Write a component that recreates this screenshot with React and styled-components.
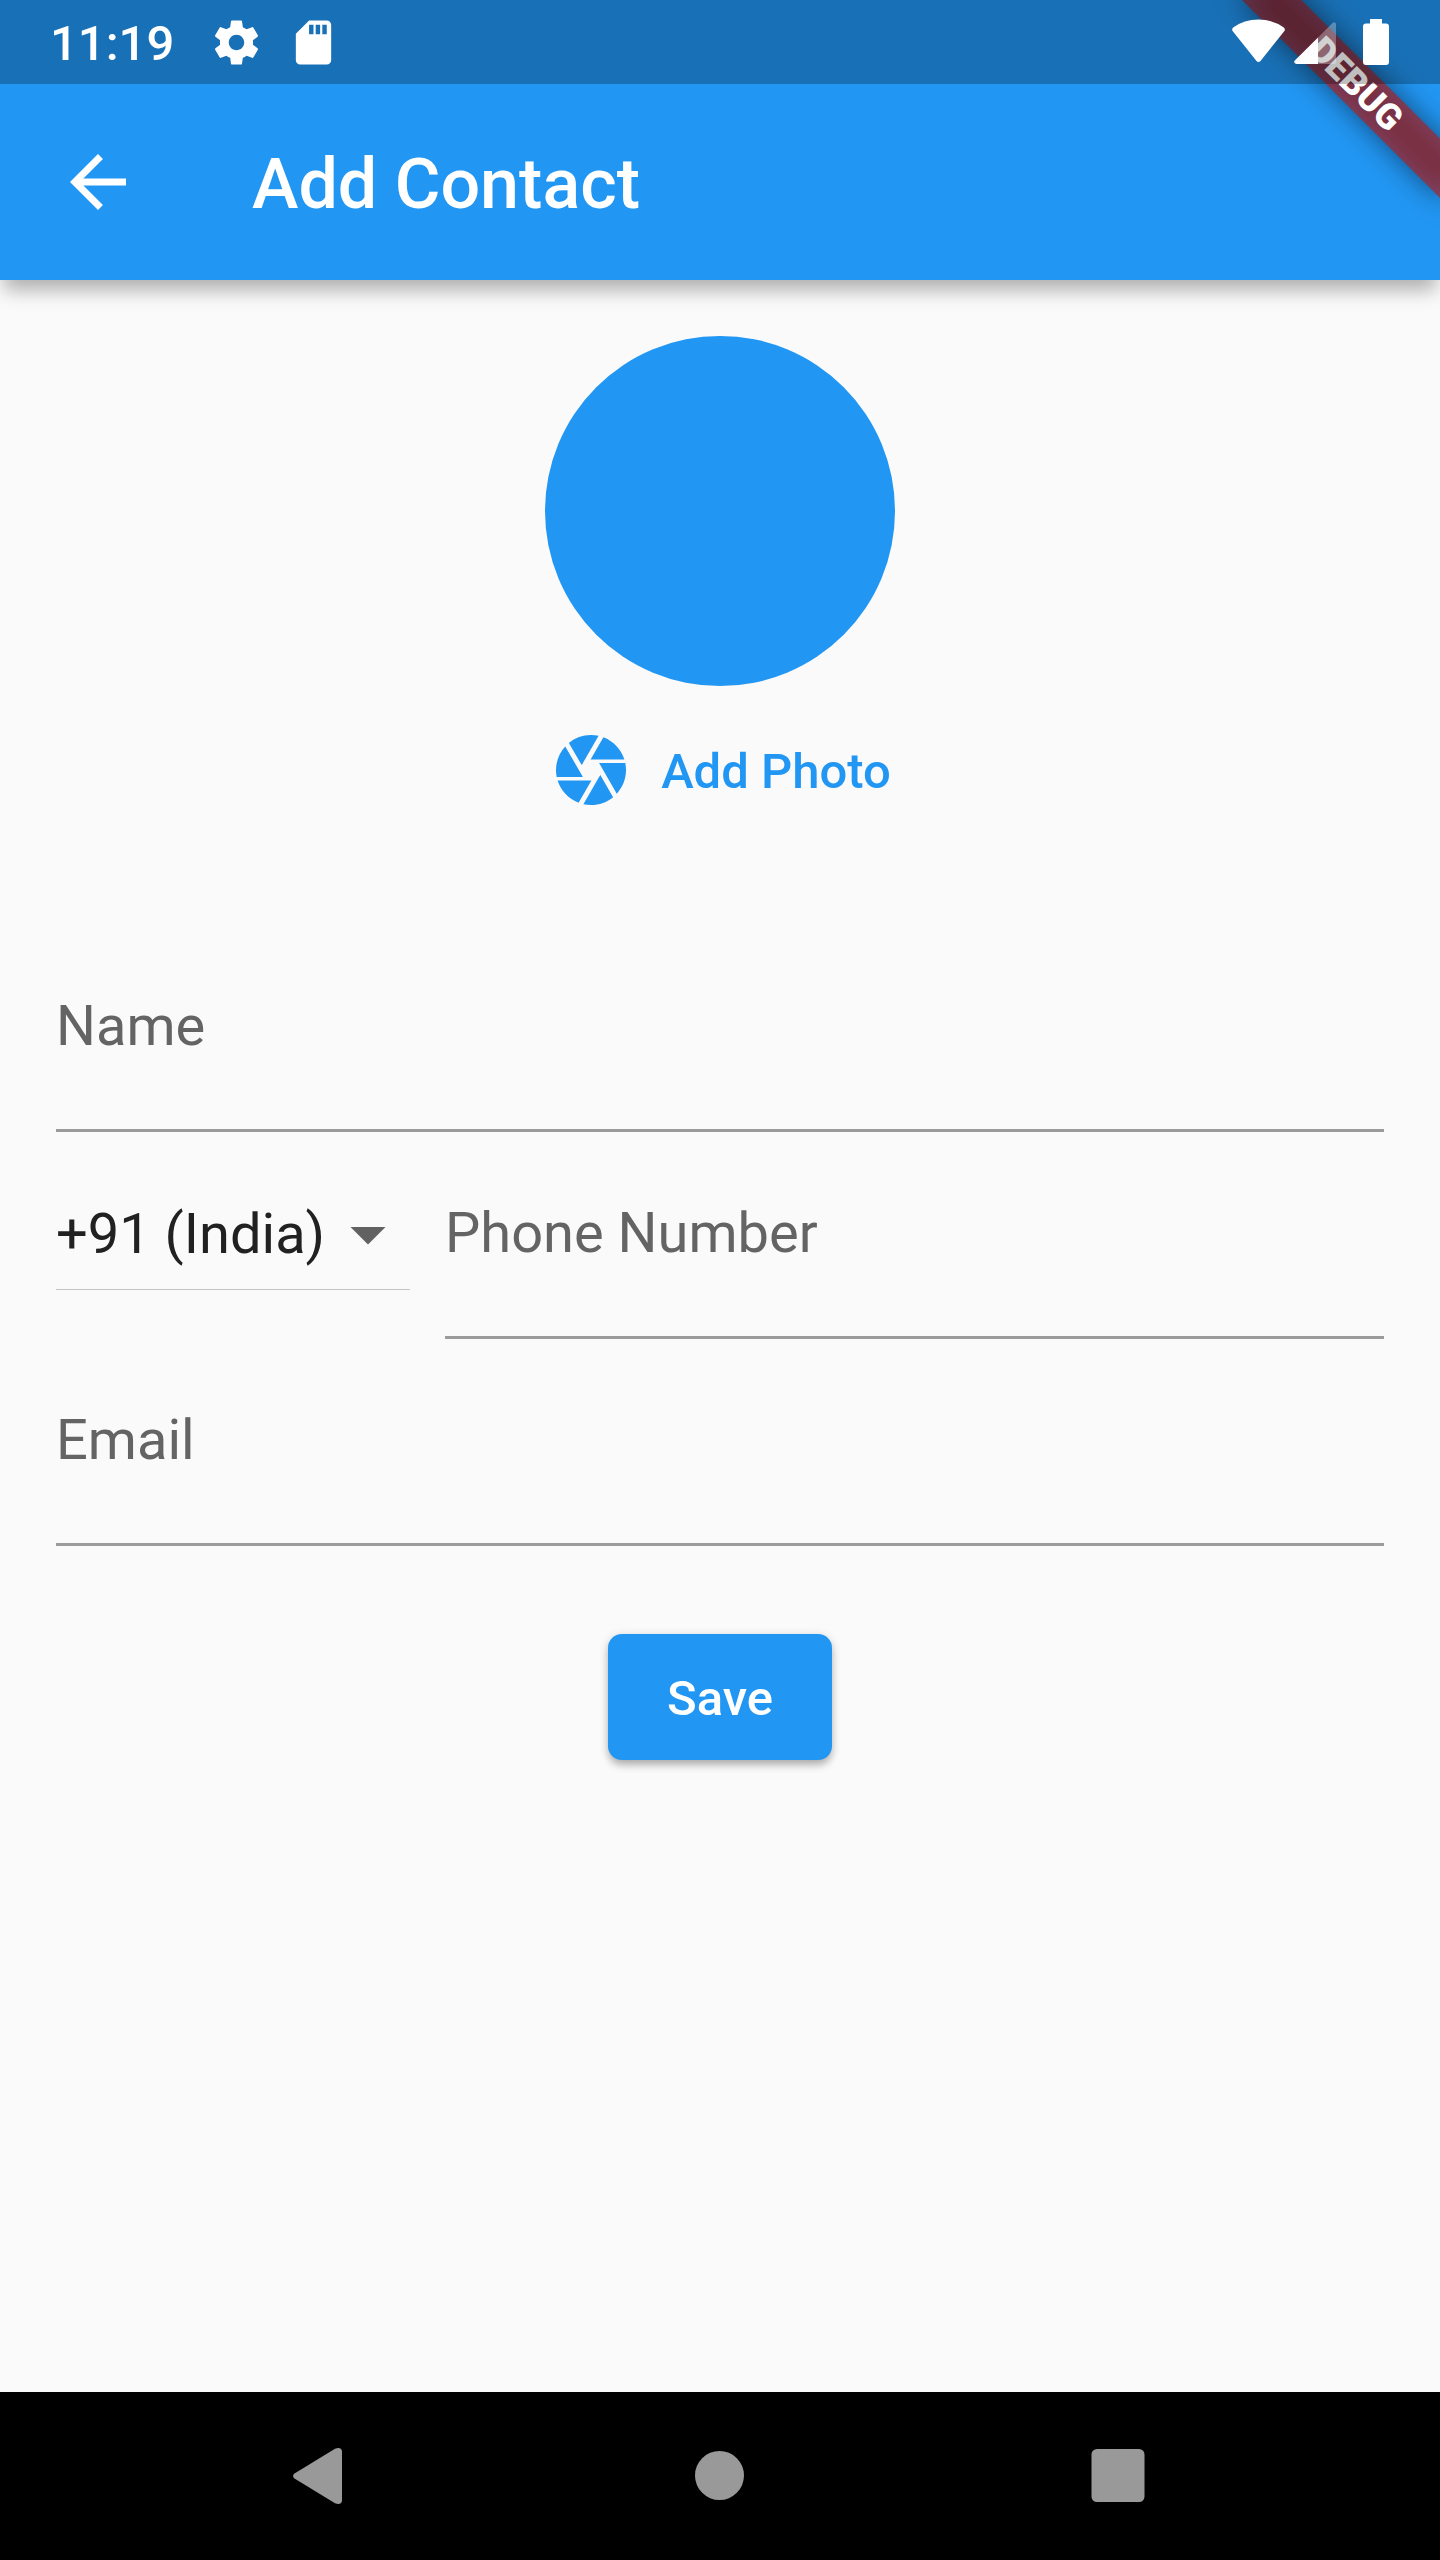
import React from "react";
import styled, { createGlobalStyle } from "styled-components";

const GlobalStyle = createGlobalStyle`
  *, *::before, *::after { box-sizing: border-box; }
  body {
    margin: 0;
    background: #fafafa;
    font-family: Roboto, "Noto Sans", sans-serif;
  }
  button, input, select { font: inherit; }
`;

const Screen = styled.div`
  display: flex;
  flex-direction: column;
  min-height: 100vh;
  background: #fafafa;
`;

const Header = styled.header`
  position: relative;
  background: #2196f3;
  color: #fff;
  box-shadow: 0 14px 18px -4px rgba(0, 0, 0, 0.3);
`;

const StatusBar = styled.div`
  position: relative;
  z-index: 2;
  display: flex;
  align-items: center;
  justify-content: space-between;
  height: 84px;
  padding: 0 50px;
  background: rgba(0, 0, 0, 0.25);
`;

const StatusGroup = styled.div`
  display: flex;
  align-items: center;
  gap: ${(p) => p.$gap}px;
`;

const Clock = styled.time`
  padding: 3px 12px 0 0;
  font-size: 49px;
  line-height: 60px;
  font-weight: 500;
`;

const Glyph = styled.svg`
  display: block;
  flex: none;
  width: ${(p) => p.$w}px;
  height: ${(p) => p.$h || p.$w}px;
  fill: currentColor;
`;

const Toolbar = styled.div`
  display: flex;
  align-items: center;
  gap: 84px;
  height: 196px;
  padding: 0 56px;
`;

const IconButton = styled.button`
  display: flex;
  padding: 0;
  border: 0;
  background: none;
  color: inherit;
  cursor: pointer;
`;

const Title = styled.h1`
  margin: 0;
  padding: 3px 0 0 28px;
  font-size: 70px;
  line-height: 84px;
  font-weight: 500;
`;

const Corner = styled.div`
  position: absolute;
  top: 0;
  right: 0;
  z-index: 1;
  width: 280px;
  height: 280px;
  overflow: hidden;
  pointer-events: none;
`;

const Ribbon = styled.div`
  position: absolute;
  top: 98px;
  right: -140px;
  width: 280px;
  height: 42px;
  transform: rotate(45deg);
  transform-origin: 140px -98px;
  font-size: 36px;
  line-height: 42px;
  font-weight: 900;
  text-align: center;

  &::before {
    content: "";
    position: absolute;
    inset: 0;
    background: rgba(0, 0, 0, 0.5);
    filter: blur(14px);
  }
`;

const RibbonText = styled.span`
  position: relative;
  display: block;
  background: rgba(183, 28, 28, 0.63);
`;

const Main = styled.main`
  flex: 1;
  display: flex;
  flex-direction: column;
  align-items: center;
  padding: 56px;
`;

const Avatar = styled.div`
  width: 350px;
  height: 350px;
  border-radius: 50%;
  background: #2196f3;
`;

const TextButton = styled.button`
  display: flex;
  align-items: center;
  gap: 28px;
  height: 168px;
  padding: 0 28px;
  border: 0;
  background: none;
  color: #2196f3;
  cursor: pointer;
`;

const ButtonText = styled.span`
  display: block;
  padding-top: 3px;
  font-size: 49px;
  line-height: 60px;
  font-weight: 500;
`;

const Form = styled.form`
  align-self: stretch;
  display: flex;
  flex-direction: column;
  gap: 68px;
  margin-top: 139px;
`;

const Row = styled.div`
  display: flex;
  align-items: flex-start;
  gap: 35px;
`;

const Field = styled.div`
  flex: 1;
  min-width: 0;
  display: flex;
  flex-direction: column;
`;

const Label = styled.label`
  color: #646464;
  font-size: 56px;
  line-height: 66px;
`;

const Input = styled.input`
  width: 100%;
  height: 73px;
  padding: 0;
  border: 0;
  border-bottom: 3px solid #9b9b9b;
  border-radius: 0;
  outline: none;
  background: none;
  color: #212121;
  font-size: 56px;
`;

const SelectBox = styled.div`
  display: grid;
  grid-template-columns: 270px 84px;
  border-bottom: 1px solid #c4c4c4;
  color: #616161;
`;

const Select = styled.select`
  grid-area: 1 / 1 / 2 / 3;
  appearance: none;
  width: 100%;
  padding: 1px 0 22px;
  border: 0;
  outline: none;
  background: none;
  color: #212121;
  font-size: 56px;
  line-height: 66px;
`;

const SelectArrow = styled(Glyph)`
  grid-area: 1 / 2 / 2 / 3;
  pointer-events: none;
`;

const SaveButton = styled.button`
  align-self: center;
  min-width: 224px;
  height: 126px;
  margin-top: 20px;
  padding: 0 56px;
  border: 0;
  border-radius: 14px;
  background: #2196f3;
  color: #fff;
  box-shadow: 0 6px 8px -1px rgba(0, 0, 0, 0.26), 0 1px 10px rgba(0, 0, 0, 0.12);
  cursor: pointer;
`;

const NavBar = styled.nav`
  display: flex;
  align-items: center;
  justify-content: center;
  gap: 315px;
  height: 168px;
  background: #000;
  color: #999;
`;

export default function App() {
  return (
    <Screen>
      <GlobalStyle />
      <Header>
        <StatusBar>
          <StatusGroup $gap={24}>
            <Clock>11:19</Clock>
            <Glyph $w={53} viewBox="0 0 24 24" aria-hidden="true">
              <path d="M19.43 12.98c.04-.32.07-.64.07-.98s-.03-.66-.07-.98l2.11-1.65c.19-.15.24-.42.12-.64l-2-3.46c-.12-.22-.39-.3-.61-.22l-2.49 1c-.52-.4-1.08-.73-1.69-.98l-.38-2.65C14.46 2.18 14.25 2 14 2h-4c-.25 0-.46.18-.49.42l-.38 2.65c-.61.25-1.17.59-1.69.98l-2.49-1c-.23-.09-.49 0-.61.22l-2 3.46c-.13.22-.07.49.12.64l2.11 1.65c-.04.32-.07.65-.07.98s.03.66.07.98l-2.11 1.65c-.19.15-.24.42-.12.64l2 3.46c.12.22.39.3.61.22l2.49-1c.52.4 1.08.73 1.69.98l.38 2.65c.03.24.24.42.49.42h4c.25 0 .46-.18.49-.42l.38-2.65c.61-.25 1.17-.59 1.69-.98l2.49 1c.23.09.49 0 .61-.22l2-3.46c.12-.22.07-.49-.12-.64l-2.11-1.65zM12 15.5c-1.93 0-3.5-1.57-3.5-3.5s1.57-3.5 3.5-3.5 3.5 1.57 3.5 3.5-1.57 3.5-3.5 3.5z" />
            </Glyph>
            <Glyph $w={53} viewBox="0 0 24 24" aria-hidden="true">
              <path d="M18 2h-8L4 8v12c0 1.1.9 2 2 2h12c1.1 0 2-.9 2-2V4c0-1.1-.9-2-2-2zm-6 6.300h-2V4h2v4.300zm3 0h-2V4h2v4.300zm3 0h-2V4h2v4.300z" />
            </Glyph>
          </StatusGroup>
          <StatusGroup $gap={9}>
            <Glyph $w={53} $h={46} viewBox="0 0 53 46" aria-hidden="true">
              <path d="M1.200 8.500Q12 .5 26.500 .5T51.800 8.500Q53.800 10.500 52 12.600L28.500 42Q26.500 44 24.500 42L1 12.600Q-.8 10.500 1.200 8.500z" />
            </Glyph>
            <Glyph $w={42} $h={46} viewBox="0 0 42 46" aria-hidden="true">
              <path d="M24 18.500V45H2.500Q-1 44 .8 41.500z" />
              <path opacity=".3" d="M24 18.500L38.500 4Q41 2 42 5V43Q42 45 40 45H24z" />
            </Glyph>
            <Glyph $w={45} $h={46} viewBox="-18 0 45 46" aria-hidden="true">
              <path d="M7 0h12v4.500h4q3 0 3 3V43q0 3-3 3H3q-3 0-3-3V7.500q0-3 3-3h4z" />
            </Glyph>
          </StatusGroup>
        </StatusBar>
        <Toolbar>
          <IconButton type="button" aria-label="Back">
            <Glyph $w={84} viewBox="0 0 24 24" aria-hidden="true">
              <path d="M20 11H7.830l5.590-5.590L12 4l-8 8 8 8 1.410-1.410L7.830 13H20v-2z" />
            </Glyph>
          </IconButton>
          <Title>Add Contact</Title>
        </Toolbar>
        <Corner>
          <Ribbon>
            <RibbonText>DEBUG</RibbonText>
          </Ribbon>
        </Corner>
      </Header>

      <Main>
        <Avatar />
        <TextButton type="button">
          <Glyph $w={84} viewBox="0 0 24 24" aria-hidden="true">
            <path d="M9.400 10.500l4.770-8.260C13.470 2.090 12.750 2 12 2c-2.400 0-4.600.85-6.320 2.250l3.660 6.350.06-.1zM21.540 9c-.92-2.920-3.150-5.260-6-6.340L11.880 9h9.660zm.26 1h-7.490l.29.5 4.760 8.250C21 16.970 22 14.610 22 12c0-.69-.07-1.350-.2-2zM8.540 12l-3.900-6.750C3.010 7.030 2 9.390 2 12c0 .69.07 1.350.2 2h7.490l-1.150-2zm-6.080 3c.92 2.920 3.150 5.260 6 6.340L12.120 15H2.460zm11.270 0l-3.900 6.760c.7.150 1.420.24 2.170.24 2.400 0 4.600-.85 6.320-2.250l-3.660-6.350-.93 1.600z" />
          </Glyph>
          <ButtonText>Add Photo</ButtonText>
        </TextButton>

        <Form onSubmit={(e) => e.preventDefault()}>
          <Field>
            <Label htmlFor="name">Name</Label>
            <Input id="name" type="text" />
          </Field>
          <Row>
            <SelectBox>
              <Select aria-label="Country code" defaultValue="91">
                <option value="91">+91 (India)</option>
              </Select>
              <SelectArrow $w={84} $h={66} viewBox="0 2.300 24 18.860" aria-hidden="true">
                <path d="M7 10l5 5 5-5z" />
              </SelectArrow>
            </SelectBox>
            <Field>
              <Label htmlFor="phone">Phone Number</Label>
              <Input id="phone" type="tel" />
            </Field>
          </Row>
          <Field>
            <Label htmlFor="email">Email</Label>
            <Input id="email" type="email" />
          </Field>
          <SaveButton type="submit">
            <ButtonText>Save</ButtonText>
          </SaveButton>
        </Form>
      </Main>

      <NavBar>
        <IconButton type="button" aria-label="System back">
          <Glyph $w={84} viewBox="0 0 84 84" aria-hidden="true">
            <path d="M15.500 39.500L56 14.700Q62 12.500 63 17V67Q62 71.500 56 69.300L15.500 44.500Q12.500 42 15.500 39.500z" />
          </Glyph>
        </IconButton>
        <IconButton type="button" aria-label="Home">
          <Glyph $w={84} viewBox="0 0 84 84" aria-hidden="true">
            <circle cx="41.500" cy="41.500" r="24.500" />
          </Glyph>
        </IconButton>
        <IconButton type="button" aria-label="Recent apps">
          <Glyph $w={84} viewBox="0 0 84 84" aria-hidden="true">
            <rect x="14.500" y="15" width="53" height="53" rx="5.500" />
          </Glyph>
        </IconButton>
      </NavBar>
    </Screen>
  );
}
